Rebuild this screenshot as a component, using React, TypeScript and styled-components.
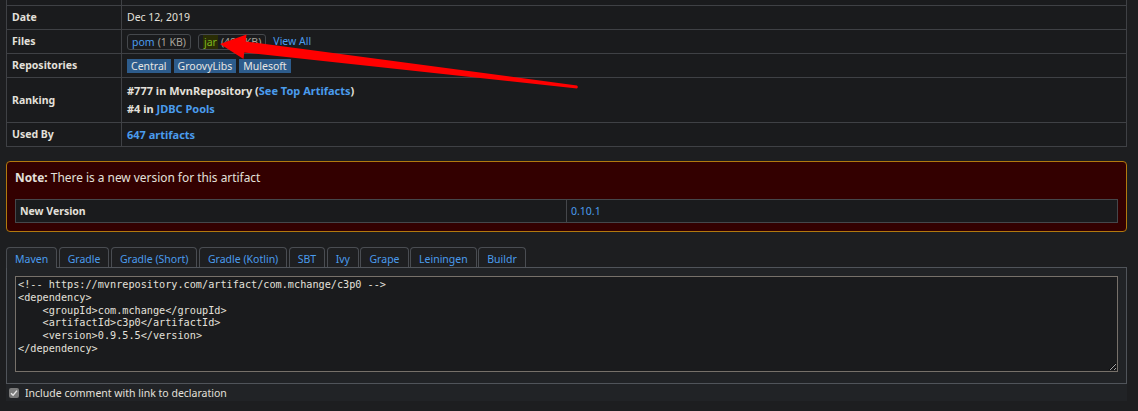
import React from "react";
import styled, { createGlobalStyle } from "styled-components";

const GlobalStyle = createGlobalStyle`
  html, body { margin: 0; padding: 0; background: #1d1e20; }
  body {
    font-family: "Noto Sans", "Open Sans", sans-serif;
    font-size: 10.5px;
    color: #e3e0db;
  }
  * { box-sizing: border-box; }
`;

const Root = styled.div`
  position: relative;
  display: flow-root;
  height: 411px;
  overflow: hidden;
`;

const Page = styled.div`
  margin-top: -19px;
  padding: 0 11px 0 6px;
`;

const InfoTable = styled.table`
  width: 100%;
  border-collapse: collapse;
  background: #1a1b1d;
  border: 1px solid #3f4145;
`;

const Label = styled.th`
  width: 115px;
  padding: 4px 5px;
  line-height: 15px;
  height: 24px;
  text-align: left;
  font-weight: 700;
  border: 1px solid #3f4145;
  vertical-align: middle;
`;

const Value = styled.td`
  padding: 4px 5px;
  line-height: 15px;
  border: 1px solid #3f4145;
  vertical-align: middle;
`;

const InlineRow = styled.div<{ $gap: number }>`
  display: flex;
  align-items: center;
  gap: ${(p) => p.$gap}px;
  height: 15px;
`;

const Link = styled.a<{ $bold?: boolean }>`
  color: #4a9ced;
  text-decoration: none;
  font-weight: ${(p) => (p.$bold ? 700 : 400)};
`;

const BigBold = styled.div`
  font-size: 11px;
  font-weight: 700;
  line-height: 15px;
  height: 15px;
`;

const FileBadge = styled.span`
  display: inline-flex;
  align-items: center;
  height: 16px;
  padding: 0 4px;
  border: 1px solid #45484c;
  border-radius: 3px;
  line-height: 14px;
  color: #a8a39b;
  gap: 3px;
`;

const JarName = styled.span`
  color: #7db81f;
  background: #2a2d05;
  padding: 0 1px;
`;

const RepoBadge = styled.span`
  display: inline-block;
  background: #2d5c8c;
  color: #e8e6e3;
  padding: 0 4px;
  line-height: 14px;
`;

const RankLine = styled.div`
  line-height: 18px;
  height: 18px;
  font-weight: 700;
  font-size: 11px;
`;

const Strong = styled.span`
  font-weight: 700;
`;

const NoteBox = styled.div`
  margin-top: 14px;
  background: #330000;
  border: 1px solid #b27a0e;
  border-radius: 4px;
  padding: 8px 8px 8px;
`;

const NoteText = styled.div`
  font-size: 11.9px;
  line-height: 14px;
  height: 14px;
  margin-bottom: 15px;
`;

const NoteTable = styled.table`
  width: 100%;
  border-collapse: collapse;
  background: #1a1b1d;
  border: 1px solid #45474b;
`;

const NoteCell = styled.td<{ $head?: boolean }>`
  width: 50%;
  padding: 4px 4px;
  line-height: 14px;
  border: 1px solid #45474b;
  font-weight: ${(p) => (p.$head ? 700 : 400)};
`;

const TabList = styled.div`
  display: flex;
  gap: 1.5px;
  margin-top: 15px;
  position: relative;
  z-index: 1;
`;

const Tab = styled.a<{ $active?: boolean }>`
  display: block;
  padding: 4px 8px 1px;
  line-height: 14px;
  color: #4a9ced;
  text-decoration: none;
  border: 1px solid #4a4d52;
  border-bottom: none;
  border-radius: 4px 4px 0 0;
  background: ${(p) => (p.$active ? "#212326" : "#1e1f21")};
  margin-bottom: ${(p) => (p.$active ? "-1px" : "0")};
  padding-bottom: ${(p) => (p.$active ? "2px" : "1px")};
`;

const TabArea = styled.div`
  background: #212326;
`;

const Panel = styled.div`
  border: 1px solid #50545a;
  padding: 8px 8px 11px;
`;

const Code = styled.textarea`
  display: block;
  width: 100%;
  height: 96px;
  margin: 0;
  padding: 2px 2px;
  background: #1a1b1d;
  border: 1px solid #77716a;
  border-radius: 0;
  color: #e3e0db;
  font-family: "DejaVu Sans Mono", "Liberation Mono", monospace;
  font-size: 10.2px;
  line-height: 12.8px;
  color-scheme: dark;
  outline: none;
`;

const CheckRow = styled.label`
  display: flex;
  align-items: center;
  gap: 6px;
  height: 17px;
  padding-left: 3px;
  font-size: 10.5px;
`;

const CheckBox = styled.span`
  display: inline-flex;
  align-items: center;
  justify-content: center;
  width: 10px;
  height: 10px;
  border-radius: 2px;
  background: #7a7a7a;
`;

const Overlay = styled.svg`
  position: absolute;
  left: 0;
  top: 0;
  pointer-events: none;
`;

const code = `<!-- https://mvnrepository.com/artifact/com.mchange/c3p0 -->
<dependency>
    <groupId>com.mchange</groupId>
    <artifactId>c3p0</artifactId>
    <version>0.9.5.5</version>
</dependency>`;

const tabs = ["Maven", "Gradle", "Gradle (Short)", "Gradle (Kotlin)", "SBT", "Ivy", "Grape", "Leiningen", "Buildr"];

export default function App() {
  return (
    <Root>
      <GlobalStyle />
      <Page>
        <InfoTable>
          <tbody>
            <tr>
              <Label />
              <Value />
            </tr>
            <tr>
              <Label>Date</Label>
              <Value>Dec 12, 2019</Value>
            </tr>
            <tr>
              <Label>Files</Label>
              <Value>
                <InlineRow $gap={7}>
                  <FileBadge>
                    <Link>pom</Link>(1 KB)
                  </FileBadge>
                  <FileBadge>
                    <JarName>jar</JarName>(488 KB)
                  </FileBadge>
                  <Link>View All</Link>
                </InlineRow>
              </Value>
            </tr>
            <tr>
              <Label>Repositories</Label>
              <Value>
                <InlineRow $gap={3}>
                  <RepoBadge>Central</RepoBadge>
                  <RepoBadge>GroovyLibs</RepoBadge>
                  <RepoBadge>Mulesoft</RepoBadge>
                </InlineRow>
              </Value>
            </tr>
            <tr>
              <Label>Ranking</Label>
              <Value>
                <RankLine>
                  #777 in MvnRepository (<Link $bold>See Top Artifacts</Link>)
                </RankLine>
                <RankLine>
                  #4 in <Link $bold>JDBC Pools</Link>
                </RankLine>
              </Value>
            </tr>
            <tr>
              <Label>Used By</Label>
              <Value>
                <BigBold>
                  <Link $bold>647 artifacts</Link>
                </BigBold>
              </Value>
            </tr>
          </tbody>
        </InfoTable>

        <NoteBox>
          <NoteText>
            <Strong>Note:</Strong> There is a new version for this artifact
          </NoteText>
          <NoteTable>
            <tbody>
              <tr>
                <NoteCell $head>New Version</NoteCell>
                <NoteCell>
                  <Link>0.10.1</Link>
                </NoteCell>
              </tr>
            </tbody>
          </NoteTable>
        </NoteBox>

        <TabList>
          {tabs.map((t, i) => (
            <Tab key={t} $active={i === 0}>
              {t}
            </Tab>
          ))}
        </TabList>
        <TabArea>
          <Panel>
            <Code readOnly value={code} spellCheck={false} />
          </Panel>
          <CheckRow>
            <CheckBox>
              <svg width="8" height="8" viewBox="0 0 8 8">
                <path d="M1 4.2 L3.1 6.3 L7 1.6" stroke="#e6e6e6" strokeWidth="1.4" fill="none" />
              </svg>
            </CheckBox>
            Include comment with link to declaration
          </CheckRow>
        </TabArea>
      </Page>
      <Overlay width="1138" height="411" viewBox="0 0 1138 411">
        <polygon
          points="220,44 246.5,34.5 245.7,41.5 577,85.5 578,87 577,88.5 244.3,52.5 243.5,59"
          fill="#ff0000"
        />
      </Overlay>
    </Root>
  );
}
